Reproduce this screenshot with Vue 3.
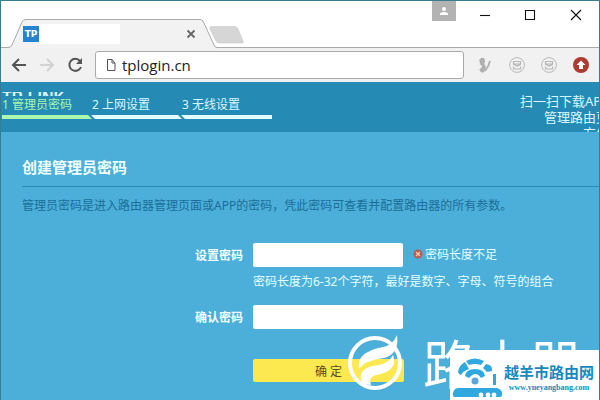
<template>
  <div class="window">
    <header class="titlebar">
      <div class="tab">
        <svg class="tab-shape" viewBox="0 0 212 30" width="212" height="30">
          <path d="M0 28.5H3Q6 28.5 7 26L17 3Q18 .5 21 .5H195Q197 .5 198 2L209 26Q210 28.5 212 28.5V30H0Z" fill="#f2f2f2" />
          <path d="M0 28.5H3Q6 28.5 7 26L17 3Q18 .5 21 .5H195Q197 .5 198 2L209 26Q210 28.5 212 28.5" fill="none" stroke="#aaa" />
        </svg>
        <span class="favicon">TP</span>
        <span class="tab-title"></span>
        <button class="tab-close" aria-label="Close tab">
          <svg viewBox="0 0 10 10" width="10" height="10">
            <path d="M1.5 1.5L8.5 8.5M8.5 1.5L1.5 8.5" stroke="#666" stroke-width="1.8" />
          </svg>
        </button>
      </div>
      <button class="new-tab" aria-label="New tab">
        <svg viewBox="0 0 36 18" width="36" height="18">
          <path d="M3 .5H26Q28 .5 29 3L34 15Q35 17 33 17H10Q8 17 7 15L1 3Q0 .5 3 .5Z" fill="#d6d6d6" stroke="#c6c6c6" stroke-width=".6" />
        </svg>
      </button>
      <div class="window-controls">
        <button class="profile" aria-label="Profile">
          <svg viewBox="0 0 10 10" width="10" height="10">
            <circle cx="5" cy="3" r="2" fill="#fff" />
            <path d="M1 9V8Q1 6 5 6T9 8V9Z" fill="#fff" />
          </svg>
        </button>
        <button v-for="c in controls" :key="c.label" class="control" :aria-label="c.label">
          <svg viewBox="0 0 12 12" width="12" height="12">
            <path :d="c.path" fill="none" stroke="#111" stroke-width="1.1" />
          </svg>
        </button>
      </div>
    </header>

    <nav class="toolbar">
      <button class="nav" aria-label="Back">
        <svg viewBox="0 0 16 16" width="16" height="16">
          <path d="M15 8H2M8 2L2 8L8 14" fill="none" stroke="#555" stroke-width="2" />
        </svg>
      </button>
      <button class="nav" aria-label="Forward">
        <svg viewBox="0 0 16 16" width="16" height="16">
          <path d="M1 8H14M8 2L14 8L8 14" fill="none" stroke="#d2d2d2" stroke-width="2" />
        </svg>
      </button>
      <button class="nav" aria-label="Reload">
        <svg viewBox="0 0 16 16" width="16" height="16">
          <path d="M13 4A6 6 0 1 0 14 10" fill="none" stroke="#555" stroke-width="2" />
          <path d="M15 1V7H9Z" fill="#555" />
        </svg>
      </button>
      <div class="address">
        <svg viewBox="0 0 10 12" width="10" height="12">
          <path d="M1.5 .5H6L9 4V11.5H1.5ZM6 .5V4H9" fill="none" stroke="#555" />
        </svg>
        <input v-model="url" class="url" aria-label="Address" />
      </div>
      <div class="extensions">
        <svg viewBox="0 0 16 16" width="16" height="16">
          <path d="M4 1Q8 0 8 4Q8 6 7 7Q10 9 8 13Q7 17 4 15Q1 13 4 11Q6 10 4 8Q2 7 3 5Q1 3 4 1Z" fill="#b0b0b0" />
          <path d="M13 4Q12 9 8 14" fill="none" stroke="#b0b0b0" stroke-width="1.8" />
        </svg>
        <svg v-for="n in 2" :key="n" viewBox="0 0 16 16" width="16" height="16">
          <circle cx="8" cy="8" r="7.4" fill="none" stroke="#b9b9b9" />
          <path d="M4.5 4.5H11.5V7H4.5ZM4.5 9.5V12H11.5V9.5M4 7L8 9L12 7" fill="none" stroke="#b5b5b5" stroke-width="1.2" />
        </svg>
        <svg viewBox="0 0 16 16" width="16" height="16">
          <circle cx="8" cy="8" r="8" fill="#ad3b32" />
          <path d="M8 3.5L12.5 8H10V12H6V8H3.5Z" fill="#fff" />
        </svg>
      </div>
    </nav>

    <div class="page">
      <div class="banner">
        <div class="progress">
          <div class="brand">TP-LINK</div>
          <ol class="steps">
            <li v-for="(step, i) in steps" :key="step" :class="{ active: i === 0 }">{{ i + 1 }} {{ step }}</li>
          </ol>
        </div>
        <div class="download">
          <div>扫一扫下载APP</div>
          <div>管理路由更</div>
          <div>方便</div>
        </div>
      </div>

      <main class="content">
        <h1>创建管理员密码</h1>
        <p class="intro">管理员密码是进入路由器管理页面或APP的密码，凭此密码可查看并配置路由器的所有参数。</p>
        <form class="form" @submit.prevent>
          <label for="password">设置密码</label>
          <div class="field">
            <input id="password" v-model="password" type="password" />
            <span class="error">
              <svg viewBox="0 0 10 10" width="10" height="10">
                <circle cx="5" cy="5" r="4.5" fill="#b65b55" />
                <path d="M3 3L7 7M7 3L3 7" stroke="#ffc9a8" stroke-width="1.4" />
              </svg>
              密码长度不足
            </span>
          </div>
          <p class="hint">密码长度为6-32个字符，最好是数字、字母、符号的组合</p>
          <label for="confirm">确认密码</label>
          <div class="field">
            <input id="confirm" v-model="confirm" type="password" />
          </div>
          <button class="submit" type="submit">确 定</button>
        </form>
      </main>
    </div>

    <div class="watermark">
      <svg viewBox="0 0 56 56" width="56" height="56">
        <circle cx="28" cy="29" r="25" fill="none" stroke="#fff" stroke-width="4" />
        <path d="M12 35Q10 22 23 17Q26 15 36 13Q46 11 50 1Q52 14 45 20Q41 24 31 25Q18 27 12 35Z" fill="#fff" />
        <path d="M16 50Q10 39 20 34Q24 32 32 31Q42 29 46 21Q50 33 39 38Q35 40 29 41Q21 43 24 51Z" fill="#fff" />
      </svg>
      <span>路由器</span>
    </div>

    <div class="site-badge">
      <svg viewBox="0 0 52 42" width="52" height="42">
        <path d="M8 15Q9 8 15 5L19 12Q13 14 11 18Q9 18 8 15Z" fill="#2fa8e0" />
        <path d="M16 4Q25 -1 34 4L31 8Q25 6 19 8Z" fill="#2fa8e0" />
        <path d="M36 7Q43 8 42 14L37 15L33 11Z" fill="#2fa8e0" />
        <path d="M43 17H46V28H43Z" fill="#2fa8e0" />
        <path d="M15 19Q16 12 25 12T35 19L31 21Q26 13 19 21Z" fill="#2fa8e0" />
        <circle cx="25" cy="24" r="3.5" fill="#5aa6da" />
        <path d="M9 31H47Q53 33 52 38Q52 40 49 40H5Q2 40 3 36Q4 31 9 31Z" fill="#2fa8e0" />
        <circle cx="31" cy="38" r="2.4" fill="#fff" />
        <circle cx="38" cy="38" r="2.4" fill="#fff" />
        <circle cx="44" cy="38" r="2.4" fill="#fff" />
      </svg>
      <div class="site-text">
        <strong>越羊市路由网</strong>
        <span>www.yneyangbang.com</span>
      </div>
    </div>
  </div>
</template>

<script setup>
import { ref } from 'vue'

const url = ref('tplogin.cn')
const password = ref('')
const confirm = ref('')

const steps = ['管理员密码', '上网设置', '无线设置']

const controls = [
  { label: 'Minimize', path: 'M1 6.5H11' },
  { label: 'Maximize', path: 'M1.5 1.5H10.5V10.5H1.5Z' },
  { label: 'Close', path: 'M1 1L11 11M11 1L1 11' },
]
</script>

<style>
body {
  background: #4bafd9;
}
</style>

<style scoped>
.window {
  position: relative;
  box-sizing: border-box;
  min-height: 100vh;
  overflow: hidden;
  border: 1px solid #397b91;
  border-bottom: 0;
  background: #4bafd9;
  font-family: 'Noto Sans', 'Noto Sans CJK SC', sans-serif;
  font-size: 12px;
}
button {
  padding: 0;
  border: 0;
  background: none;
}
svg {
  display: block;
  flex: none;
}
.titlebar {
  display: flex;
  align-items: flex-end;
  height: 47px;
  padding-left: 4px;
  background: linear-gradient(#aaa, #aaa) bottom / 100% 1px no-repeat #fff;
}
.tab {
  position: relative;
  display: flex;
  align-items: center;
  box-sizing: border-box;
  width: 212px;
  height: 29px;
  padding: 0 21px 0 18px;
}
.tab-shape {
  position: absolute;
  top: 0;
  left: 0;
}
.favicon {
  position: relative;
  width: 16px;
  background: #2683d2;
  color: #fff;
  font: bold 9px/16px 'DejaVu Sans', sans-serif;
  text-align: center;
}
.tab-title {
  position: relative;
  width: 81px;
  height: 20px;
  background: #fff;
}
.tab-close {
  position: relative;
  margin-left: auto;
}
.new-tab {
  margin: 0 0 4px -8px;
}
.window-controls {
  display: flex;
  align-self: flex-start;
  margin-left: auto;
}
.profile {
  display: grid;
  place-items: center;
  width: 24px;
  height: 20px;
  margin-right: 6px;
  background: #b3b3b3;
}
.control {
  display: grid;
  place-items: center;
  width: 45px;
  height: 28px;
}
.control:last-child {
  width: 47px;
}
.toolbar {
  display: flex;
  align-items: center;
  gap: 12px;
  height: 34px;
  padding: 0 10px;
  background: #f1f1f1;
}
.address {
  display: flex;
  flex: 1;
  align-items: center;
  box-sizing: border-box;
  gap: 6px;
  height: 28px;
  margin-right: 1px;
  padding: 0 10px;
  border: 1px solid #aaa;
  border-radius: 3px;
  background: #fff;
}
.url {
  flex: 1;
  min-width: 0;
  padding: 0;
  border: 0;
  outline: 0;
  background: none;
  color: #222;
  font: 15px/20px 'Open Sans', sans-serif;
}
.extensions {
  display: flex;
  gap: 16px;
}
.banner {
  display: flex;
  justify-content: space-between;
  height: 50px;
  overflow: hidden;
  background: #258ab4;
  color: #d9f7ff;
}
.progress {
  padding-left: 1px;
}
.brand {
  height: 4px;
  margin-top: 10px;
  overflow: hidden;
  font: bold 16px/12px 'Liberation Sans', sans-serif;
}
.steps {
  display: flex;
  margin: 0;
  padding: 0;
  list-style: none;
}
.steps li {
  position: relative;
  width: 90px;
  padding-bottom: 2px;
  border-bottom: 4px solid #e4ffff;
  line-height: 17px;
  white-space: nowrap;
}
/* slanted gap between two steps */
.steps li + li::before {
  content: '';
  position: absolute;
  bottom: -4px;
  left: -2px;
  width: 3px;
  height: 4px;
  background: #258ab4;
  transform: skewX(45deg);
}
.steps .active {
  border-color: #a9f8ae;
  color: #a9f8ae;
}
.download {
  margin-top: 11px;
  margin-right: -10px;
  font-size: 13px;
  line-height: 16px;
  text-align: right;
  white-space: nowrap;
}
.content {
  padding: 24px 0 16px 21px;
}
h1 {
  margin: 0;
  padding-bottom: 8px;
  border-bottom: 1px solid #258ab4;
  color: #efffff;
  font-size: 15px;
  line-height: 22px;
}
.intro {
  margin: 9px 0 27px;
  color: #1c6e98;
  line-height: 20px;
  white-space: nowrap;
}
.form {
  display: grid;
  grid-template-columns: 221px 1fr;
  column-gap: 10px;
  align-items: center;
}
label {
  color: #efffff;
  font-weight: bold;
  text-align: right;
}
.field {
  display: flex;
  align-items: center;
  gap: 10px;
}
.field input {
  box-sizing: border-box;
  width: 150px;
  height: 24px;
  padding: 0 8px;
  border: 0;
  border-radius: 2px;
  background: #fff;
}
.error {
  display: flex;
  align-items: center;
  gap: 2px;
  padding-bottom: 2px;
  color: #e4ffff;
}
.hint {
  grid-column: 2;
  margin: 5px 0 13px;
  color: #e4ffff;
  line-height: 20px;
}
.submit {
  grid-column: 2;
  width: 151px;
  height: 23px;
  margin-top: 30px;
  border-radius: 2px;
  background: #fce94f;
  color: #574e20;
  font: inherit;
}
.watermark {
  position: absolute;
  top: 333px;
  left: 346px;
  display: flex;
  align-items: center;
  gap: 20px;
  height: 56px;
  color: #fff;
  font-size: 53px;
  white-space: nowrap;
}
.site-badge {
  position: absolute;
  top: 349px;
  left: 449px;
  right: 0;
  display: flex;
  align-items: center;
  box-sizing: border-box;
  height: 51px;
  padding-top: 4px;
  background: #fff;
}
.site-text {
  display: flex;
  flex-direction: column;
  align-items: center;
  margin-left: 2px;
  color: #1789bf;
  white-space: nowrap;
}
.site-text strong {
  font-size: 15px;
  line-height: 20px;
}
.site-text span {
  font: bold 8px/12px 'Liberation Serif', serif;
}
</style>
